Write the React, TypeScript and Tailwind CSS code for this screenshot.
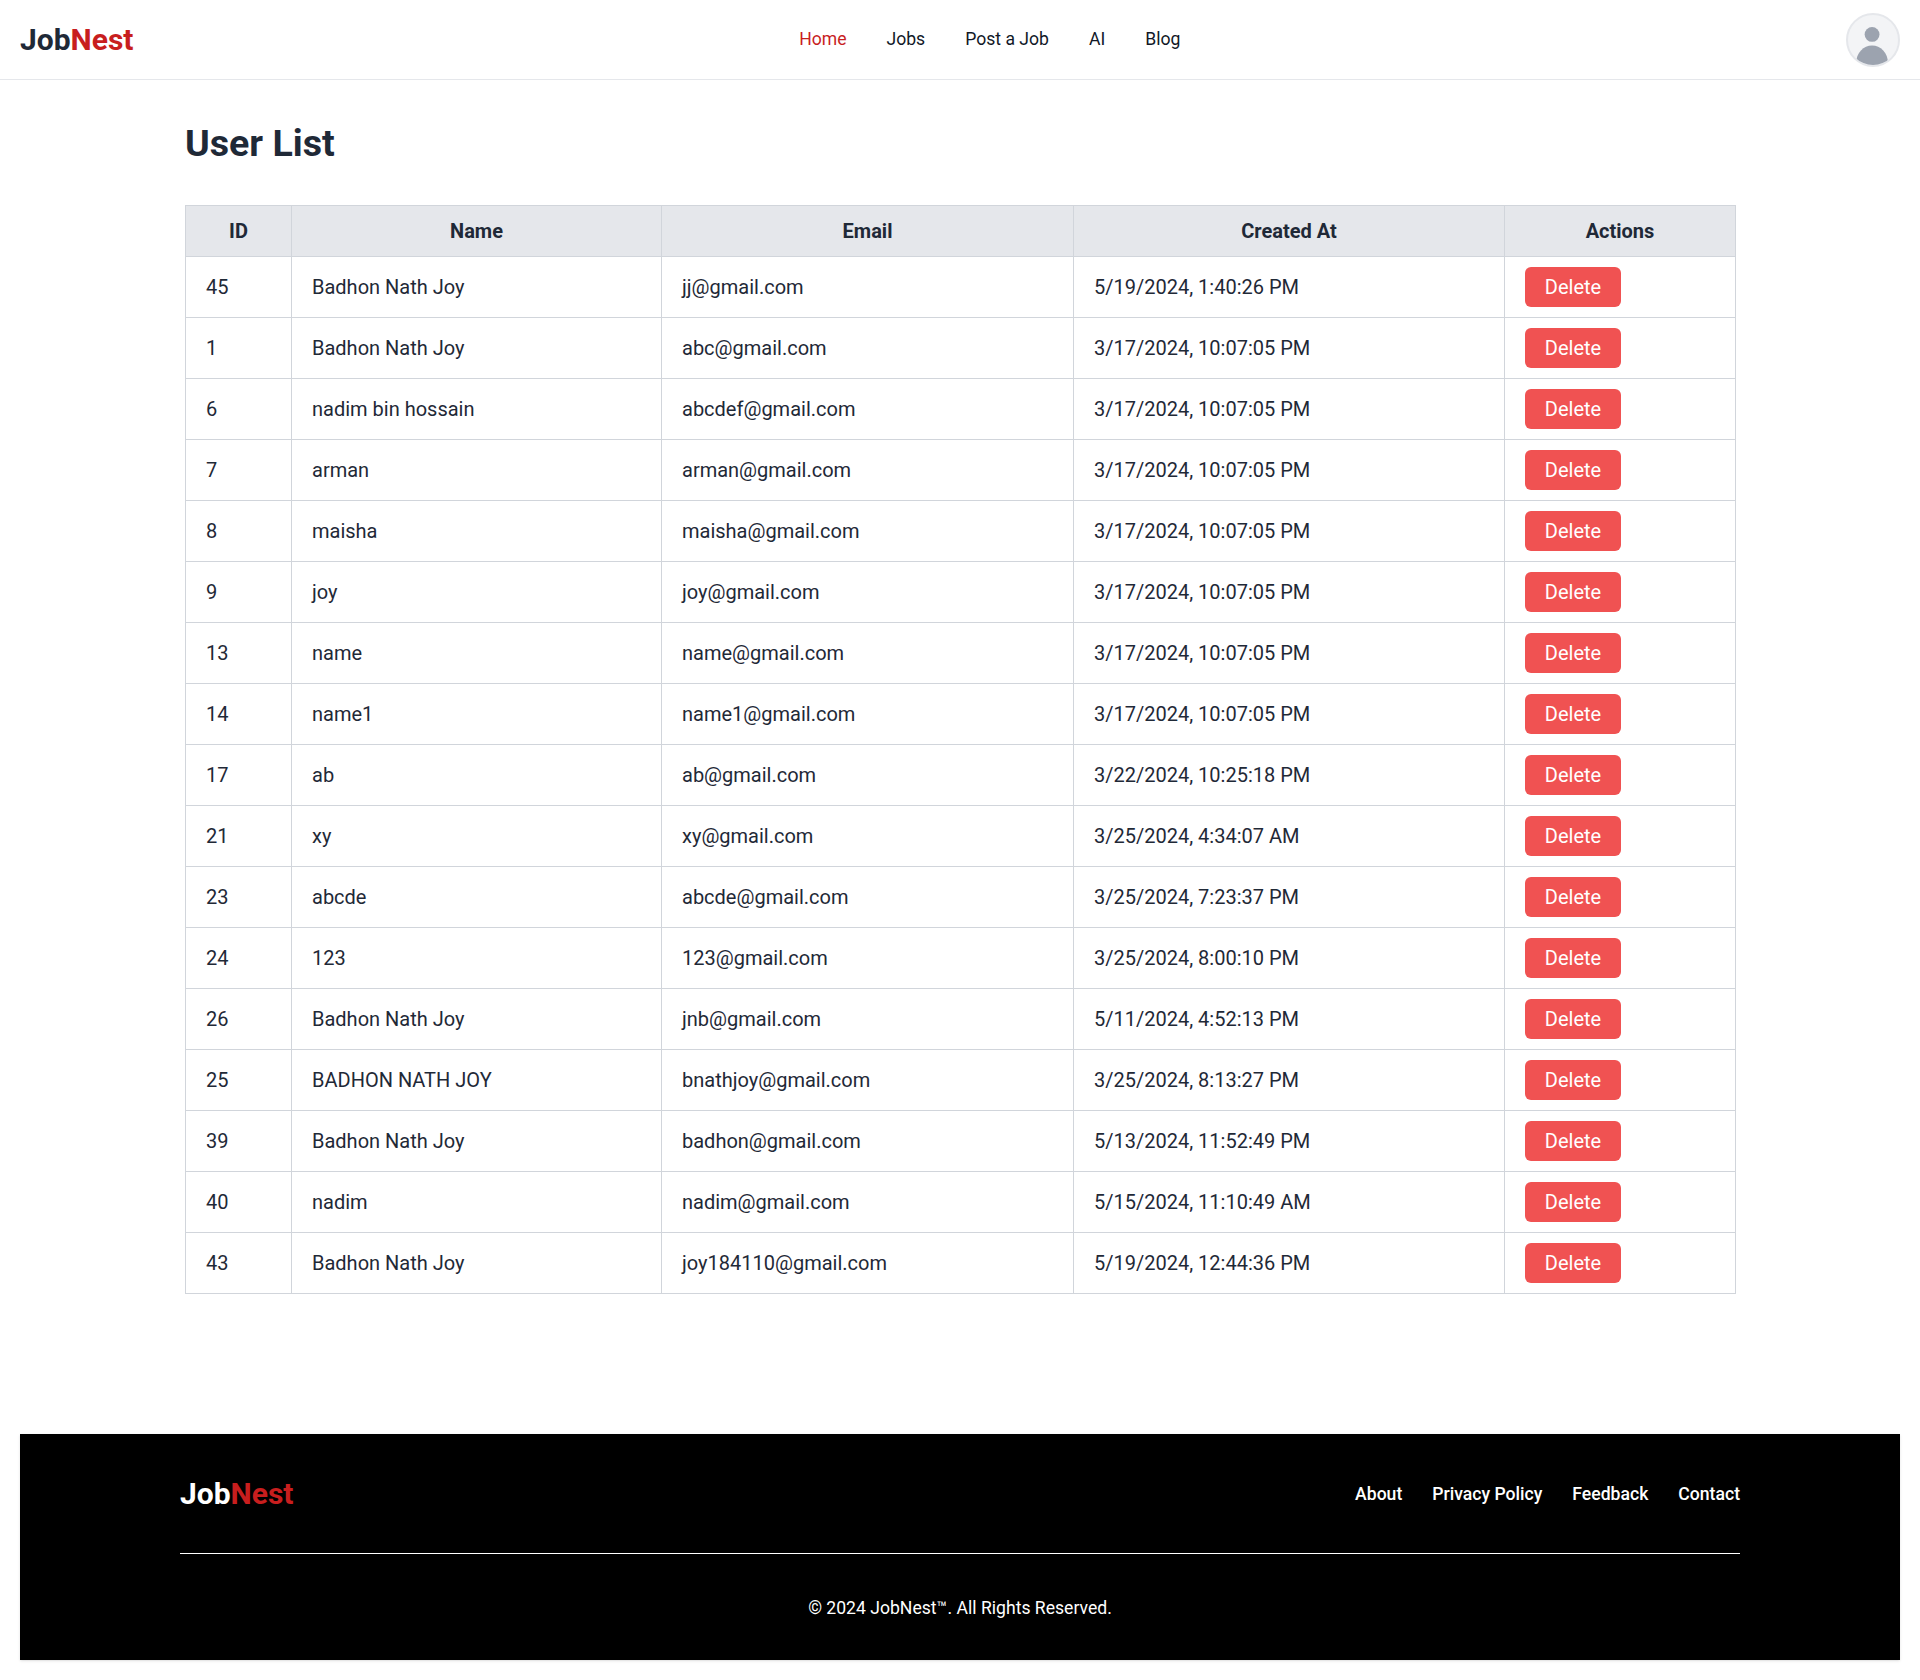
const users = [
  { id: 45, name: 'Badhon Nath Joy', email: 'jj@gmail.com', createdAt: '5/19/2024, 1:40:26 PM' },
  { id: 1, name: 'Badhon Nath Joy', email: 'abc@gmail.com', createdAt: '3/17/2024, 10:07:05 PM' },
  { id: 6, name: 'nadim bin hossain', email: 'abcdef@gmail.com', createdAt: '3/17/2024, 10:07:05 PM' },
  { id: 7, name: 'arman', email: 'arman@gmail.com', createdAt: '3/17/2024, 10:07:05 PM' },
  { id: 8, name: 'maisha', email: 'maisha@gmail.com', createdAt: '3/17/2024, 10:07:05 PM' },
  { id: 9, name: 'joy', email: 'joy@gmail.com', createdAt: '3/17/2024, 10:07:05 PM' },
  { id: 13, name: 'name', email: 'name@gmail.com', createdAt: '3/17/2024, 10:07:05 PM' },
  { id: 14, name: 'name1', email: 'name1@gmail.com', createdAt: '3/17/2024, 10:07:05 PM' },
  { id: 17, name: 'ab', email: 'ab@gmail.com', createdAt: '3/22/2024, 10:25:18 PM' },
  { id: 21, name: 'xy', email: 'xy@gmail.com', createdAt: '3/25/2024, 4:34:07 AM' },
  { id: 23, name: 'abcde', email: 'abcde@gmail.com', createdAt: '3/25/2024, 7:23:37 PM' },
  { id: 24, name: '123', email: '123@gmail.com', createdAt: '3/25/2024, 8:00:10 PM' },
  { id: 26, name: 'Badhon Nath Joy', email: 'jnb@gmail.com', createdAt: '5/11/2024, 4:52:13 PM' },
  { id: 25, name: 'BADHON NATH JOY', email: 'bnathjoy@gmail.com', createdAt: '3/25/2024, 8:13:27 PM' },
  { id: 39, name: 'Badhon Nath Joy', email: 'badhon@gmail.com', createdAt: '5/13/2024, 11:52:49 PM' },
  { id: 40, name: 'nadim', email: 'nadim@gmail.com', createdAt: '5/15/2024, 11:10:49 AM' },
  { id: 43, name: 'Badhon Nath Joy', email: 'joy184110@gmail.com', createdAt: '5/19/2024, 12:44:36 PM' },
];

const navLinks = ['Home', 'Jobs', 'Post a Job', 'AI', 'Blog'];
const footerLinks = ['About', 'Privacy Policy', 'Feedback', 'Contact'];

function Header() {
  return (
    <header className="flex h-20 items-center justify-between border-b border-[#e5e7eb] px-5">
      <a className="text-[30px] leading-9 font-bold text-[#1f2937]">
        Job<span className="text-[#c81e1e]">Nest</span>
      </a>
      <nav className="flex items-center gap-10 text-[17.6px] text-[#111827]">
        {navLinks.map((link) => (
          <a key={link} className={link === 'Home' ? 'text-[#c81e1e]' : ''}>
            {link}
          </a>
        ))}
      </nav>
      <div className="h-[54px] w-[54px] overflow-hidden rounded-full border-2 border-[#e5e7eb] bg-[#f3f4f6]">
        <svg viewBox="0 0 54 54" className="h-full w-full" fill="#9ca3af">
          <circle cx="26" cy="21" r="8" />
          <ellipse cx="26" cy="51" rx="17" ry="18" />
        </svg>
      </div>
    </header>
  );
}

function UserTable() {
  return (
    <table className="w-[1550px] table-fixed border-collapse text-[#1f2937]">
      <colgroup>
        <col className="w-[106px]" />
        <col className="w-[370px]" />
        <col className="w-[412px]" />
        <col className="w-[431px]" />
        <col className="w-[231px]" />
      </colgroup>
      <thead>
        <tr className="h-[51px] bg-[#e5e7eb] text-xl font-bold">
          <th className="border border-[#d1d5db] px-5">ID</th>
          <th className="border border-[#d1d5db] px-5">Name</th>
          <th className="border border-[#d1d5db] px-5">Email</th>
          <th className="border border-[#d1d5db] px-5">Created At</th>
          <th className="border border-[#d1d5db] px-5">Actions</th>
        </tr>
      </thead>
      <tbody className="text-xl">
        {users.map((user) => (
          <tr key={user.id} className="h-[61px]">
            <td className="border border-[#d1d5db] px-5">{user.id}</td>
            <td className="border border-[#d1d5db] px-5">{user.name}</td>
            <td className="border border-[#d1d5db] px-5">{user.email}</td>
            <td className="border border-[#d1d5db] px-5">{user.createdAt}</td>
            <td className="border border-[#d1d5db] px-5">
              <button className="flex h-10 w-24 items-center justify-center rounded-md bg-[#f05252] text-white">
                Delete
              </button>
            </td>
          </tr>
        ))}
      </tbody>
    </table>
  );
}

function Footer() {
  return (
    <footer className="mx-5 mt-[140px] mb-5 h-[226px] bg-black px-[160px] pt-[42px] text-white shadow">
      <div className="flex items-center justify-between">
        <a className="text-[30px] leading-9 font-bold">
          Job<span className="text-[#c81e1e]">Nest</span>
        </a>
        <ul className="flex gap-[30px] text-[17.6px] font-medium">
          {footerLinks.map((link) => (
            <li key={link}>{link}</li>
          ))}
        </ul>
      </div>
      <hr className="mt-[41px] border-white" />
      <p className="mt-[41px] text-center text-[17.6px]">© 2024 JobNest™. All Rights Reserved.</p>
    </footer>
  );
}

export default function App() {
  return (
    <div className="bg-white font-['Roboto',sans-serif] text-base">
      <Header />
      <main className="mx-auto w-[1550px]">
        <h1 className="mt-[43px] mb-[41px] text-[37.6px] leading-[41px] font-bold text-[#1f2937]">User List</h1>
        <UserTable />
      </main>
      <Footer />
    </div>
  );
}
